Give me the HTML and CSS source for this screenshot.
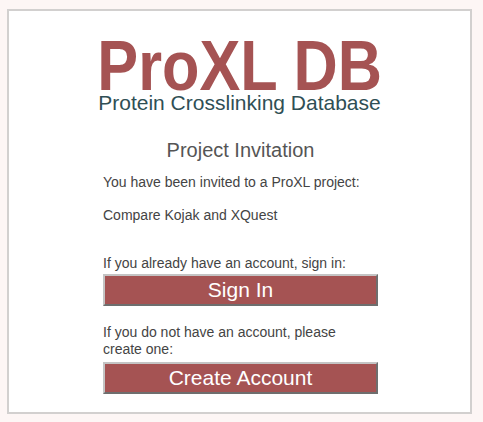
FILE: index.html
```html
<!DOCTYPE html>
<html>
<head>
<meta charset="utf-8">
<link rel="stylesheet" href="styles.css">
</head>
<body>
<div class="box">
  <div class="logo">
    <div class="logo-title"><span class="logo-text">ProXL DB</span></div>
    <div class="logo-sub">Protein Crosslinking Database</div>
  </div>
  <div class="content">
    <h2 class="heading">Project Invitation</h2>
    <p class="line invited">You have been invited to a ProXL project:</p>
    <p class="line project">Compare Kojak and XQuest</p>
    <p class="line signin-label">If you already have an account, sign in:</p>
    <button class="btn">Sign In</button>
    <p class="line create-label">If you do not have an account, please create one:</p>
    <button class="btn">Create Account</button>
  </div>
</div>
</body>
</html>
```
FILE: styles.css
```css
html, body {
  margin: 0;
  padding: 0;
}
body {
  background: #fdf6f5;
  font-family: "Liberation Sans", Arial, sans-serif;
  padding: 9px 0 0 7px;
}
.box {
  width: 461px;
  height: 401px;
  border: 2px solid #d2d0cf;
  background: #ffffff;
}
.logo {
  text-align: center;
  padding-top: 30px;
}
.logo-title {
  font-weight: bold;
  font-size: 70px;
  line-height: 50px;
  color: #a55353;
}
.logo-text {
  display: inline-block;
  transform: scaleX(0.875);
}
.logo-sub {
  margin-top: 3px;
  font-size: 21px;
  line-height: 18px;
  color: #2f4f55;
}
.content {
  width: 275px;
  margin: 0 0 0 94px;
}
.heading {
  margin: 28px 0 0 0;
  font-weight: normal;
  font-size: 20px;
  line-height: 20px;
  text-align: center;
  color: #555555;
}
.line {
  margin: 0;
  font-size: 14px;
  line-height: 17px;
  color: #444444;
}
.invited {
  margin-top: 14px;
}
.project {
  margin-top: 16px;
}
.signin-label {
  margin-top: 31px;
}
.create-label {
  margin-top: 18px;
}
.btn {
  display: block;
  width: 275px;
  height: 32px;
  margin: 0;
  padding: 0;
  background: #a55353;
  color: #ffffff;
  font-family: "Liberation Sans", Arial, sans-serif;
  font-size: 21px;
  border-style: solid;
  border-width: 2px;
  border-color: #c4c4c4 #6e6e6e #6e6e6e #c4c4c4;
}
.signin-label + .btn {
  margin-top: 2px;
}
.create-label + .btn {
  margin-top: 4px;
}
```
